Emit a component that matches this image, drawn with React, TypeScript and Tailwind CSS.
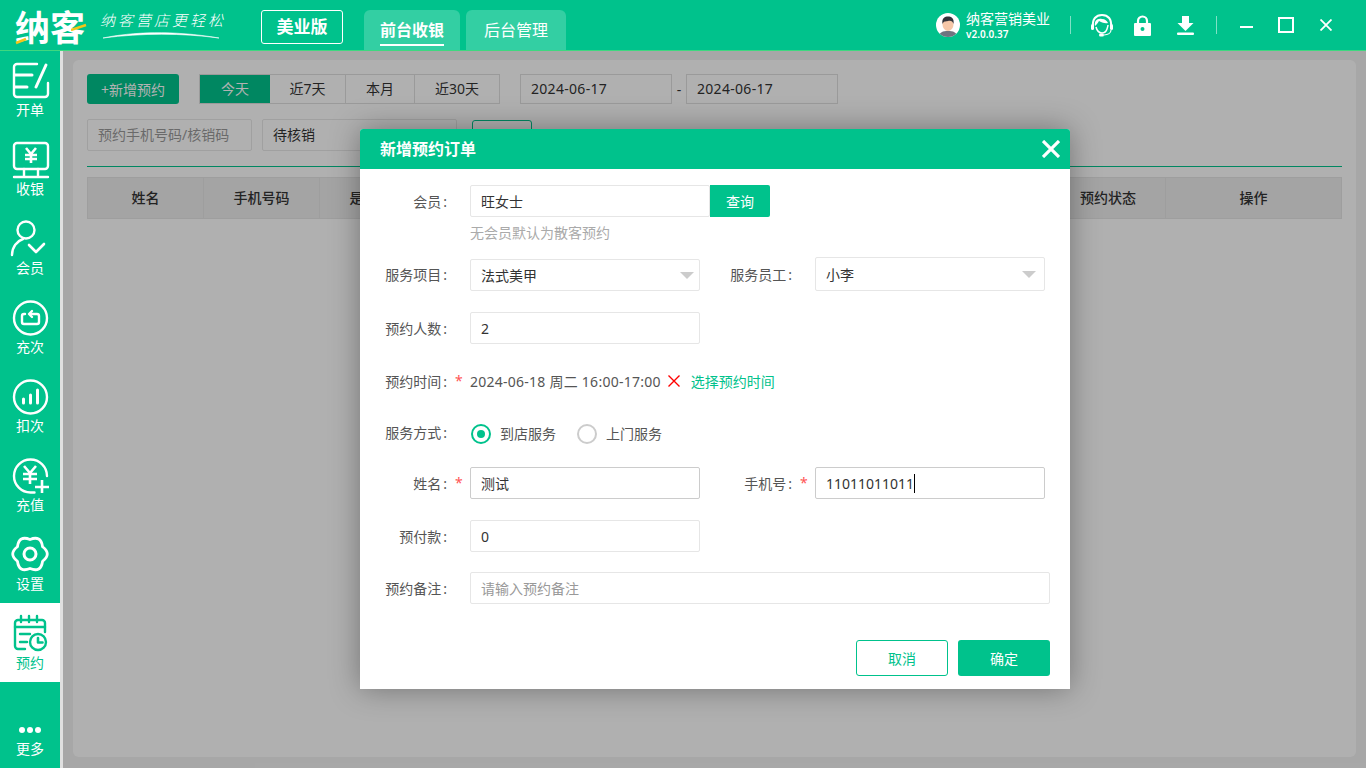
// App.tsx
import React from 'react';

const navItems = [
  { label: '开单', icon: <IconOrder /> },
  { label: '收银', icon: <IconCashier /> },
  { label: '会员', icon: <IconMember /> },
  { label: '充次', icon: <IconRefill /> },
  { label: '扣次', icon: <IconDeduct /> },
  { label: '充值', icon: <IconRecharge /> },
  { label: '设置', icon: <IconSettings /> },
  { label: '预约', icon: <IconBooking />, active: true },
];

function Svg({ children }: { children: React.ReactNode }) {
  return (
    <svg width="40" height="40" viewBox="0 0 40 40" fill="none" stroke="currentColor" strokeWidth="2.4" strokeLinecap="round" strokeLinejoin="round">
      {children}
    </svg>
  );
}

function IconOrder() {
  return (
    <Svg>
      <path d="M27 4H7a3 3 0 0 0-3 3v27a3 3 0 0 0 3 3h28a3 3 0 0 0 3-3V23" />
      <path d="M5 15h17M5 27h12M36 5 26 27" strokeWidth="3" />
    </Svg>
  );
}

function IconCashier() {
  return (
    <Svg>
      <rect x="4" y="4" width="34" height="26" rx="3" />
      <path d="M14 30v8M28 30v8M4 38h34" />
      <path d="m16 9 5 6 5-6M15 16h12M15 20h12M21 15v9" strokeWidth="2.6" strokeLinecap="butt" />
    </Svg>
  );
}

function IconMember() {
  return (
    <Svg>
      <circle cx="16" cy="12" r="8.5" />
      <path d="M2 37c0-8 5-14 11-16" />
      <path d="m19 27 7 7 8-8" strokeWidth="2.6" />
    </Svg>
  );
}

function IconRefill() {
  return (
    <Svg>
      <circle cx="20.5" cy="21" r="16.5" />
      <path d="M15 17h-1a2 2 0 0 0-2 2v6a2 2 0 0 0 2 2h13a2 2 0 0 0 2-2v-6a2 2 0 0 0-2-2h-6" />
      <path d="m22 14-3 3 3 3" />
    </Svg>
  );
}

function IconDeduct() {
  return (
    <Svg>
      <circle cx="20.500" cy="21" r="16.500" />
      <path d="M13.500 23v4M20.500 19v8M27.500 14v13" strokeWidth="3" />
    </Svg>
  );
}

function IconRecharge() {
  return (
    <Svg>
      <path d="M37 21a16.500 16.500 0 1 0-16.500 16.500h4" />
      <path d="m14 11 6 7 6-7M13 19h14M13 24h14M20 18v11" strokeWidth="2.6" strokeLinecap="butt" />
      <path d="M32 25v13M25 32h14" strokeWidth="2.6" strokeLinecap="butt" />
    </Svg>
  );
}

function IconSettings() {
  return (
    <Svg>
      <path d="M20 5.500Q9 .95 7.440 12.750Q-2 20 7.440 27.250Q9 39.050 20 34.500Q31 39.050 32.560 27.250Q42 20 32.560 12.750Q31 .95 20 5.500Z" strokeWidth="2.800" />
      <circle cx="20" cy="20" r="6" strokeWidth="3" />
    </Svg>
  );
}

function IconBooking() {
  return (
    <Svg>
      <path d="M15 36H8a3 3 0 0 1-3-3V10a3 3 0 0 1 3-3h24a3 3 0 0 1 3 3v9" />
      <path d="M11 3v6M19 3v6M27 3v6M5 14h30M10 21h10M10 29h7" />
      <circle cx="28" cy="29" r="8" />
      <path d="M28 25v4.500h4.500" strokeWidth="2.600" />
    </Svg>
  );
}

function NavItem({ label, icon, active }: { label: string; icon: React.ReactNode; active?: boolean }) {
  return (
    <div className={active ? 'h-[79px] flex flex-col items-center pt-2.5 bg-white text-[#00c28c]' : 'h-[79px] flex flex-col items-center pt-2.5 text-white'}>
      {icon}
      <span className="h-5 leading-5 text-[14px] mt-0">{label}</span>
    </div>
  );
}

function Logo() {
  return (
    <div className="flex items-center w-[246px] pl-[15px]">
      <div className="relative w-[72px] h-[34px] mt-[6px]">
        <span className="block text-[35px] leading-[34px] font-bold text-white tracking-[0px] whitespace-nowrap">纳客</span>
        <svg className="absolute left-0 top-[24px]" width="14" height="10" viewBox="0 0 14 10" fill="none">
          <path d="M1 8 11 4" stroke="#f5c518" strokeWidth="2.500" />
        </svg>
        <svg className="absolute left-[56px] top-[12px]" width="16" height="8" viewBox="0 0 16 8" fill="none">
          <path d="M0 7 15 2" stroke="#f5c518" strokeWidth="2.500" />
        </svg>
      </div>
      <div className="relative ml-[13px] w-[126px] h-[34px]">
        <span className="block text-[15px] leading-[24px] text-white italic font-light tracking-[3px] whitespace-nowrap">纳客营店更轻松</span>
        <svg className="absolute left-[2px] top-[22px]" width="118" height="10" viewBox="0 0 118 10" fill="none">
          <path d="M1 8C30 2 70 0 117 8C80 3 40 3 1 8Z" fill="#fff" stroke="#fff" strokeWidth="0.600" />
        </svg>
      </div>
    </div>
  );
}

function Avatar() {
  return (
    <svg width="24" height="24" viewBox="0 0 24 24" className="rounded-full bg-white shrink-0">
      <path d="M3 24c0-5 4-6 9-6s9 1 9 6Z" fill="#6f7480" />
      <ellipse cx="12" cy="11.500" rx="5.500" ry="6.500" fill="#f6c7a8" />
      <path d="M6.500 11C5.500 5 9 3.500 12 3.500S18.500 5 17.500 11C16.500 8 15 7.500 12 8S8 8 6.500 11Z" fill="#33333a" />
    </svg>
  );
}

function HeadsetIcon() {
  return (
    <svg width="22" height="24" viewBox="0 0 22 24" fill="none">
      <path d="M2 14C1 6 5 2 11 2s10 4 9 12" stroke="#fff" strokeWidth="2" />
      <path d="M4 13C3 8 6 5 11 6c3 0 5 2 6 4-3 1-7-1-9-2-1 2-2 3-4 5Z" fill="#fff" />
      <path d="M5 14c1 4 3 6 6 6 2 0 4-1 5-4 1-3 1-4 1-4" stroke="#fff" strokeWidth="1.500" />
      <rect x="0" y="11" width="3" height="6" rx="1.500" fill="#fff" />
      <rect x="19" y="11" width="3" height="6" rx="1.500" fill="#fff" />
      <path d="M20 17c0 3-3 5-7 5" stroke="#fff" strokeWidth="1.200" />
      <rect x="8" y="20.500" width="5" height="3" rx="1.500" fill="#fff" />
    </svg>
  );
}

function LockIcon() {
  return (
    <svg width="17" height="21" viewBox="0 0 17 21" fill="none">
      <path d="M4 9V6a4.500 4.500 0 0 1 9 0v3" stroke="#fff" strokeWidth="2.200" />
      <path fillRule="evenodd" clipRule="evenodd" d="M1 8h15a1 1 0 0 1 1 1v11a1 1 0 0 1-1 1H1a1 1 0 0 1-1-1V9a1 1 0 0 1 1-1Zm7.500 4a2 2 0 1 0 0 4 2 2 0 0 0 0-4Z" fill="#fff" />
    </svg>
  );
}

function DownloadIcon() {
  return (
    <svg width="17" height="19" viewBox="0 0 17 19" fill="#fff">
      <path d="M5 0h7v7h4.500l-8 8-8-8H5Z" />
      <rect x="0" y="16.500" width="17" height="2.500" rx="1" />
    </svg>
  );
}

function Header() {
  return (
    <header className="relative z-10 h-[50px] shrink-0 flex items-stretch bg-[#00c28c] shadow-[0_1px_0_#3fd87f] text-white">
      <Logo />
      <div className="ml-[15px] mt-[10px] w-[82px] h-[34px] border border-white rounded-[3px] flex items-center justify-center text-[17px] font-bold">美业版</div>
      <div className="ml-[21px] mt-[10px] w-[96px] h-[40px] bg-[#33cfa3] rounded-t-[6px] flex justify-center">
        <span className="h-[36px] leading-[40px] border-b-2 border-white text-[16px] font-bold">前台收银</span>
      </div>
      <div className="ml-[6px] mt-[10px] w-[100px] h-[40px] bg-[#33cfa3] rounded-t-[6px] text-center leading-[40px] text-[16px]">后台管理</div>
      <div className="ml-auto flex items-center">
        <Avatar />
        <div className="ml-[6px] w-[84px] flex flex-col pt-px">
          <span className="text-[14px] leading-[17px] whitespace-nowrap">纳客营销美业</span>
          <span className="text-[10px] leading-[14px] font-semibold">v2.0.0.37</span>
        </div>
        <div className="ml-[20px] w-px h-[18px] bg-white/50" />
        <div className="ml-[20px]"><HeadsetIcon /></div>
        <div className="ml-[21px]"><LockIcon /></div>
        <div className="ml-[26px]"><DownloadIcon /></div>
        <div className="ml-[22px] w-px h-[18px] bg-white/50" />
        <div className="ml-[23px] mt-[4px] w-[13px] h-[2px] bg-white" />
        <div className="ml-[25px] w-[16px] h-[16px] border-2 border-white" />
        <svg className="ml-[26px] mr-[34px]" width="12" height="12" viewBox="0 0 12 12" stroke="#fff" strokeWidth="1.800" fill="none">
          <path d="M0.500 0.500 11.500 11.500M11.500 0.500 0.500 11.500" />
        </svg>
      </div>
    </header>
  );
}

function Sidebar() {
  return (
    <aside className="w-[60px] shrink-0 flex flex-col bg-[#00c28c]">
      {navItems.map((item) => (
        <NavItem key={item.label} {...item} />
      ))}
      <div className="mt-auto pb-[9px] flex flex-col items-center text-white">
        <div className="flex gap-[2px] mb-[6px]">
          <span className="w-[6px] h-[6px] rounded-full bg-white" />
          <span className="w-[6px] h-[6px] rounded-full bg-white" />
          <span className="w-[6px] h-[6px] rounded-full bg-white" />
        </div>
        <span className="h-5 leading-5 text-[14px]">更多</span>
      </div>
    </aside>
  );
}

const tableColumns = [
  { label: '姓名', w: 'w-[116px]' },
  { label: '手机号码', w: 'w-[116px]' },
  { label: '是否到店', w: 'w-[116px]' },
  { label: '服务项目', w: 'w-[250px]' },
  { label: '预约时间', w: 'w-[250px]' },
  { label: '服务员工', w: 'w-[115px]' },
  { label: '预约状态', w: 'w-[115px]' },
  { label: '操作', w: 'flex-1' },
];

function BookingList() {
  return (
    <div className="flex-1 ml-[10px] mr-[10px] my-[10px] mb-[11px] bg-[#fdfdfd] rounded-[6px] px-[14px] pt-[14px]">
      <div className="flex items-center h-[30px] text-[14px]">
        <button className="w-[92px] h-[30px] rounded-[3px] bg-[#00c28c] text-white">+新增预约</button>
        <div className="ml-[20px] flex h-[30px] border border-[#ddd] text-[#333]">
          <span className="w-[70px] bg-[#00c28c] text-white text-center leading-[28px]">今天</span>
          <span className="w-[76px] border-r border-[#ddd] text-center leading-[28px]">近7天</span>
          <span className="w-[69px] border-r border-[#ddd] text-center leading-[28px]">本月</span>
          <span className="w-[84px] text-center leading-[28px]">近30天</span>
        </div>
        <div className="ml-[20px] w-[152px] h-[30px] border border-[#ddd] pl-[10px] leading-[28px] tracking-[0.3px] text-[#333]">2024-06-17</div>
        <span className="w-[14px] text-center text-[#333]">-</span>
        <div className="w-[152px] h-[30px] border border-[#ddd] pl-[10px] leading-[28px] tracking-[0.3px] text-[#333]">2024-06-17</div>
      </div>
      <div className="mt-[15px] flex h-[32px] text-[14px]">
        <div className="w-[165px] border border-[#e5e5e5] rounded-[2px] pl-[10px] leading-[30px] text-[#999]">预约手机号码/核销码</div>
        <div className="ml-[10px] w-[195px] border border-[#e5e5e5] rounded-[2px] pl-[10px] leading-[30px] text-[#333]">待核销</div>
        <div className="ml-[15px] mt-px w-[60px] h-[30px] border border-[#00c28c] rounded-[3px]" />
      </div>
      <div className="mt-[15px] h-px bg-[#00c28c]" />
      <div className="mt-[10px] flex h-[42px] bg-[#ebebeb] border border-[#e2e2e2] text-[14px] leading-[18px] font-medium text-[#333]">
        {tableColumns.map((col) => (
          <div key={col.label} className={`${col.w} border-r border-[#e2e2e2] last:border-r-0 flex items-center justify-center pb-px`}>
            {col.label}
          </div>
        ))}
      </div>
    </div>
  );
}

function Label({ text, star, width }: { text: string; star?: boolean; width: string }) {
  return (
    <>
      <span className={`${width} shrink-0 text-right text-[14px] text-[#555] whitespace-nowrap`}>
        {text}<span className="ml-[2px]">:</span>
      </span>
      <span className="w-[23px] shrink-0 pl-[8px] text-[14px] leading-[14px] text-[#f55]">{star ? '*' : ''}</span>
    </>
  );
}

function Field({ children, cls = 'w-[230px]', dark, muted }: { children?: React.ReactNode; cls?: string; dark?: boolean; muted?: boolean }) {
  return (
    <div className={`${cls} h-[32px] shrink-0 flex items-center pl-[10px] bg-white border ${dark ? 'border-[#ccc]' : 'border-[#e6e6e6]'} rounded-[2px] text-[14px] ${muted ? 'text-[#999]' : 'text-[#333]'}`}>
      {children}
    </div>
  );
}

function SelectField({ value, tall }: { value: string; tall?: boolean }) {
  return (
    <div className={`w-[230px] ${tall ? 'h-[34px] pr-[8px]' : 'h-[32px] pr-[5px]'} shrink-0 flex items-center justify-between pl-[10px] bg-white border border-[#e6e6e6] rounded-[2px] text-[14px] text-[#333]`}>
      {value}
      <svg width="14" height="7" viewBox="0 0 14 7">
        <polygon points="0,0 14,0 7,7" fill="#ccc" />
      </svg>
    </div>
  );
}

function Radio({ label, checked }: { label: string; checked?: boolean }) {
  return (
    <div className="flex items-center mr-[21px]">
      <span className={checked ? 'w-5 h-5 rounded-full border-2 border-[#00c28c] flex items-center justify-center' : 'w-5 h-5 rounded-full border-2 border-[#ccc]'}>
        {checked && <span className="w-2 h-2 rounded-full bg-[#00c28c]" />}
      </span>
      <span className="ml-[9px] text-[14px] text-[#555]">{label}</span>
    </div>
  );
}

function BookingModal() {
  return (
    <div className="absolute left-[360px] top-[129px] z-20 w-[710px] bg-white rounded-t-[3px] shadow-[0_0_30px_rgba(0,0,0,0.35)]">
      <div className="h-[40px] flex items-center justify-between pl-[20px] pr-[10px] bg-[#00c28c] rounded-t-[3px] text-white">
        <span className="text-[16px] font-bold">新增预约订单</span>
        <svg width="18" height="18" viewBox="0 0 18 18" stroke="#fff" strokeWidth="3.200" fill="none">
          <path d="M1 1 17 17M17 1 1 17" />
        </svg>
      </div>
      <div className="pt-[16px] pb-[13px]">
        <div className="flex items-center">
          <Label text="会员" width="w-[87px]" />
          <Field cls="w-[240px]">旺女士</Field>
          <button className="w-[60px] h-[32px] bg-[#00c28c] rounded-r-[2px] text-[14px] text-white">查询</button>
        </div>
        <div className="mt-[6px] pl-[110px] h-[20px] leading-[20px] text-[14px] text-[#aaa]">无会员默认为散客预约</div>

        <div className="mt-[14px] flex items-center h-[34px]">
          <Label text="服务项目" width="w-[87px]" />
          <div className="pt-[2px]"><SelectField value="法式美甲" /></div>
          <Label text="服务员工" width="w-[92px]" />
          <SelectField value="小李" tall />
        </div>

        <div className="mt-[21px] flex items-center">
          <Label text="预约人数" width="w-[87px]" />
          <Field>2</Field>
        </div>

        <div className="mt-[21px] flex items-center h-[32px]">
          <Label text="预约时间" star width="w-[87px]" />
          <span className="text-[14px] tracking-[0.25px] text-[#555] whitespace-nowrap">2024-06-18 周二 16:00-17:00</span>
          <svg className="ml-[7px]" width="12" height="12" viewBox="0 0 12 12" stroke="#f00" strokeWidth="1.400" fill="none">
            <path d="M0.500 0.500 11.500 11.500M11.500 0.500 0.500 11.500" />
          </svg>
          <span className="ml-[11px] text-[14px] text-[#00c28c] whitespace-nowrap">选择预约时间</span>
        </div>

        <div className="mt-[19px] flex items-center h-[32px]">
          <Label text="服务方式" width="w-[87px]" />
          <div className="flex pt-[3px] pl-[1px]">
            <Radio label="到店服务" checked />
            <Radio label="上门服务" />
          </div>
        </div>

        <div className="mt-[19px] flex items-center">
          <Label text="姓名" star width="w-[87px]" />
          <Field dark>测试</Field>
          <Label text="手机号" star width="w-[92px]" />
          <Field dark>
            <span>11011011011</span>
            <span className="w-px h-[19px] bg-black" />
          </Field>
        </div>

        <div className="mt-[21px] flex items-center">
          <Label text="预付款" width="w-[87px]" />
          <Field>0</Field>
        </div>

        <div className="mt-[20px] flex items-center">
          <Label text="预约备注" width="w-[87px]" />
          <Field cls="w-[580px]" muted>请输入预约备注</Field>
        </div>

        <div className="mt-[36px] pr-[20px] flex justify-end gap-[10px] text-[14px]">
          <button className="w-[92px] h-[36px] border border-[#00c28c] rounded-[3px] text-[#00c28c]">取消</button>
          <button className="w-[92px] h-[36px] bg-[#00c28c] rounded-[3px] text-white">确定</button>
        </div>
      </div>
    </div>
  );
}

export default function App() {
  return (
    <div className="relative w-[1366px] h-[768px] overflow-hidden flex flex-col bg-[#f0f0f0] font-['Noto_Sans','Noto_Sans_CJK_SC',sans-serif]">
      <Header />
      <div className="flex-1 flex min-h-0">
        <Sidebar />
        <div className="w-[3px] shrink-0 bg-[#e0e0e0]" />
        <main className="relative flex-1 flex">
          <BookingList />
          {/* dim layer under the dialog */}
          <div className="absolute inset-0 bg-black/30" />
        </main>
      </div>
      <BookingModal />
    </div>
  );
}
